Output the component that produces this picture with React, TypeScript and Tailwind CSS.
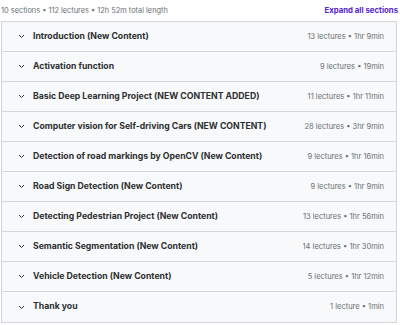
import React from 'react';

const sections = [
  { title: 'Introduction (New Content)', meta: '13 lectures • 1hr 9min' },
  { title: 'Activation function', meta: '9 lectures • 19min' },
  { title: 'Basic Deep Learning Project (NEW CONTENT ADDED)', meta: '11 lectures • 1hr 11min' },
  { title: 'Computer vision for Self-driving Cars (NEW CONTENT)', meta: '28 lectures • 3hr 9min' },
  { title: 'Detection of road markings by OpenCV (New Content)', meta: '9 lectures • 1hr 16min' },
  { title: 'Road Sign Detection (New Content)', meta: '9 lectures • 1hr 9min' },
  { title: 'Detecting Pedestrian Project (New Content)', meta: '13 lectures • 1hr 56min' },
  { title: 'Semantic Segmentation (New Content)', meta: '14 lectures • 1hr 30min' },
  { title: 'Vehicle Detection (New Content)', meta: '5 lectures • 1hr 12min' },
  { title: 'Thank you', meta: '1 lecture • 1min' },
];

const Chevron = () => (
  <svg width="7" height="5" viewBox="0 0 7 5" fill="none" className="shrink-0">
    <path d="M1 1l2.5 2.5L6 1" stroke="#2d2f31" strokeWidth="1" />
  </svg>
);

export default function App() {
  return (
    <div className="w-[400px] h-[325px] bg-white overflow-hidden font-['Inter',sans-serif] text-[#2d2f31]">
      <div className="flex items-center justify-between h-[21px] pl-[1px] pr-[2px]">
        <span className="text-[7.4px] text-[#6a6f73]">10 sections • 112 lectures • 12h 52m total length</span>
        <button className="text-[7.8px] font-bold text-[#5624d0]">Expand all sections</button>
      </div>
      <div className="mx-[1px] w-[396px] border border-[#d1d7dc]">
        {sections.map((s, i) => (
          <div
            key={i}
            className={`flex items-center h-[30px] bg-[#f7f9fa] pl-[16px] pr-[12px] ${i < sections.length - 1 ? 'border-b border-[#d1d7dc]' : ''}`}
          >
            <Chevron />
            <span className="ml-[8px] text-[8.7px] font-bold flex-1 truncate">{s.title}</span>
            <span className="text-[7.5px] text-[#6a6f73]">{s.meta}</span>
          </div>
        ))}
      </div>
    </div>
  );
}
